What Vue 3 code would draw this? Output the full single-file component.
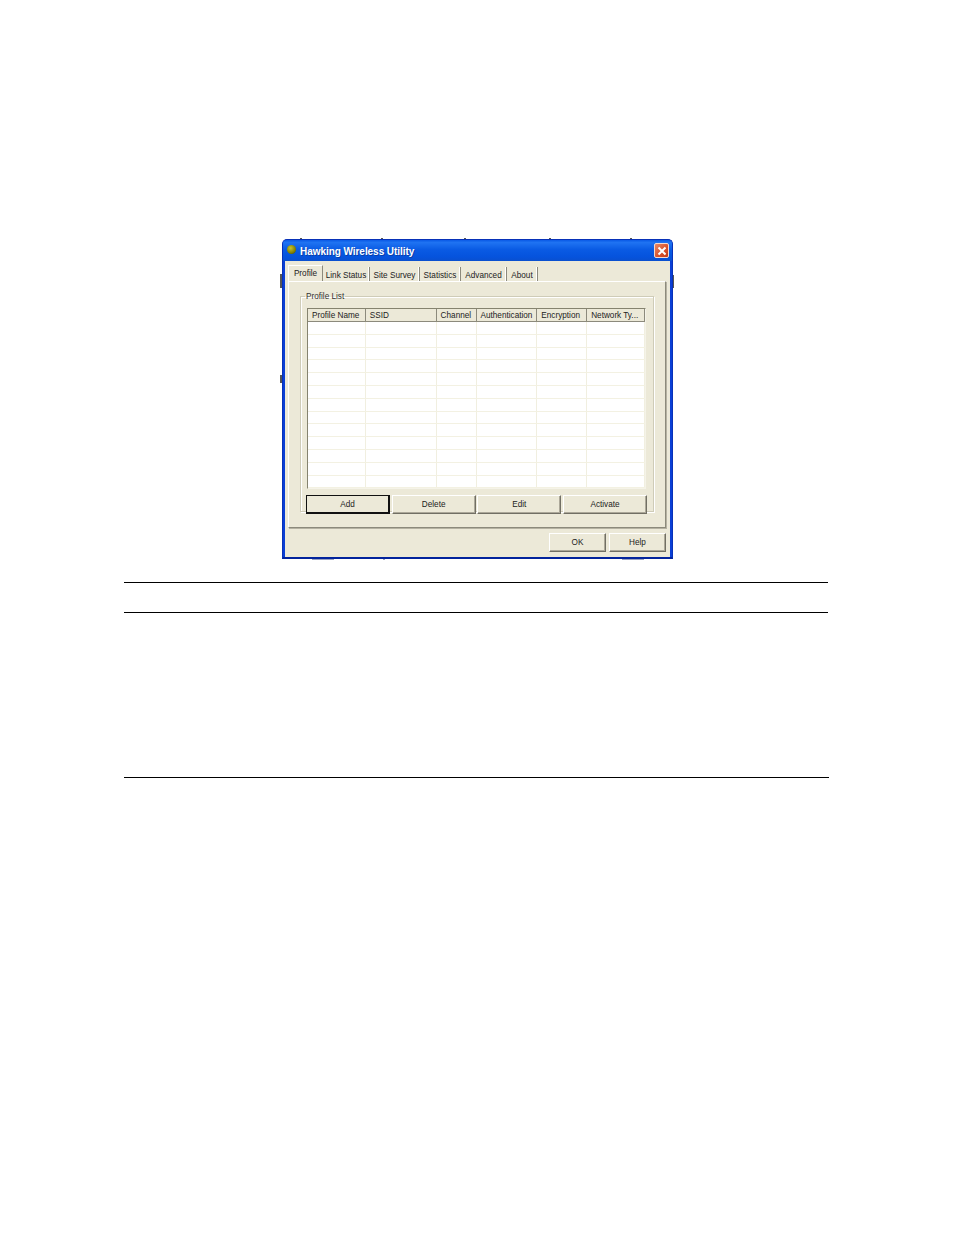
<script setup>
const tabs = [
  { label: 'Link Status', w: 47 },
  { label: 'Site Survey', w: 50 },
  { label: 'Statistics', w: 41 },
  { label: 'Advanced', w: 46 },
  { label: 'About', w: 31 }
]
const cols = [
  { label: 'Profile Name', w: 58 },
  { label: 'SSID', w: 71 },
  { label: 'Channel', w: 40 },
  { label: 'Authentication', w: 61 },
  { label: 'Encryption', w: 50 },
  { label: 'Network Ty...', w: 58 }
]
const rows = 13
const actions = ['Add', 'Delete', 'Edit', 'Activate']
const handles = [
  { x: 300, y: 238, w: 2, h: 1 }, { x: 381, y: 238, w: 2, h: 1 }, { x: 464, y: 238, w: 2, h: 1 },
  { x: 549, y: 238, w: 2, h: 1 }, { x: 630, y: 238, w: 2, h: 1 }, { x: 280, y: 274, w: 2, h: 14 },
  { x: 673, y: 275, w: 1, h: 13 }, { x: 280, y: 375, w: 2, h: 8 }, { x: 312, y: 559, w: 22, h: 1, faint: true },
  { x: 383, y: 559, w: 2, h: 1, faint: true }, { x: 622, y: 559, w: 22, h: 1, faint: true }
]
</script>

<template>
  <main class="page">
    <i
      v-for="(h, i) in handles"
      :key="i"
      class="handle"
      :class="{ faint: h.faint }"
      :style="{ left: h.x + 'px', top: h.y + 'px', width: h.w + 'px', height: h.h + 'px' }"
    ></i>

    <section class="window">
      <header class="titlebar">
        <span class="app-icon"></span>
        <span class="title">Hawking Wireless Utility</span>
        <span class="close">
          <svg width="12" height="12" viewBox="0 0 12 12">
            <path d="M2.5 2.5 9.5 9.5M9.5 2.5 2.5 9.5" stroke="#fff" stroke-width="2" fill="none" />
          </svg>
        </span>
      </header>

      <div class="client">
        <nav class="tabs">
          <span class="tab active">Profile</span>
          <span v-for="t in tabs" :key="t.label" class="tab" :style="{ width: t.w + 'px' }">{{ t.label }}</span>
        </nav>

        <div class="panel">
          <fieldset class="group">
            <legend>Profile List</legend>
            <div class="list">
              <div class="list-head">
                <span v-for="c in cols" :key="c.label" class="head-cell" :style="{ width: c.w + 'px' }">{{ c.label }}</span>
              </div>
              <div class="list-body">
                <div v-for="r in rows" :key="r" class="row">
                  <span v-for="c in cols" :key="c.label" class="cell" :style="{ width: c.w + 'px' }"></span>
                </div>
              </div>
            </div>
            <div class="actions">
              <button v-for="(a, i) in actions" :key="a" class="btn" :class="{ primary: i === 0 }">{{ a }}</button>
            </div>
          </fieldset>
        </div>

        <footer class="footer">
          <button class="btn small">OK</button>
          <button class="btn small">Help</button>
        </footer>
      </div>
    </section>

    <div class="rules">
      <hr class="rule first" />
      <hr class="rule second" />
      <hr class="rule third" />
    </div>
  </main>
</template>

<style scoped>
.page {
  position: relative;
  width: 954px;
  height: 1235px;
  background: #fff;
  padding-top: 239px;
  box-sizing: border-box;
  overflow: hidden;
  font-family: "Liberation Sans", Arial, sans-serif;
}
.handle {
  position: absolute;
  background: #555;
}
.handle.faint {
  background: #9aa3c4;
}
.window {
  margin-left: 282px;
  width: 391px;
  height: 320px;
  box-sizing: border-box;
  display: flex;
  flex-direction: column;
  background: #0a3fd6;
  border-radius: 5px 5px 0 0;
  border: 1px solid #0831b8;
  border-bottom: 2px solid #02239c;
}
.titlebar {
  height: 21px;
  flex: none;
  display: flex;
  align-items: center;
  padding: 0 3px;
  border-radius: 4px 4px 0 0;
  background: linear-gradient(#0a5ae6 0%, #1f73f2 12%, #0a5be4 45%, #0553dd 80%, #0a50cf 100%);
}
.app-icon {
  width: 9px;
  height: 9px;
  margin: -2px 4px 0 1px;
  border-radius: 50%;
  background: radial-gradient(circle at 40% 35%, #c9c42c, #7c7a00 65%, #2e2e00);
}
.title {
  flex: 1;
  padding-top: 2px;
  color: #fff;
  font-size: 10px;
  font-weight: 700;
  letter-spacing: -0.05px;
  text-shadow: 1px 1px 0 #0a3fa8;
}
.close {
  width: 15px;
  height: 15px;
  box-sizing: border-box;
  display: flex;
  align-items: center;
  justify-content: center;
  border: 1px solid #f3d9cf;
  border-radius: 2px;
  background: linear-gradient(135deg, #e88a68, #d8502a 60%, #c23a18);
}
.client {
  flex: 1;
  min-height: 0;
  margin: 0 2px;
  background: #ece9d8;
  display: flex;
  flex-direction: column;
  padding: 5px 4px 0 3px;
  color: #222;
}
.tabs {
  display: flex;
  height: 15px;
  font-size: 8.2px;
  line-height: 18px;
  align-items: flex-start;
  position: relative;
  z-index: 1;
}
.tab {
  height: 14px;
  margin-top: 1px;
  box-sizing: border-box;
  text-align: center;
  border-right: 1px solid #8c8a7c;
  white-space: nowrap;
  box-shadow: inset -1px 0 0 #fff;
}
.tab.active {
  width: 35px;
  height: 16px;
  margin-top: -1px;
  background: #ece9d8;
  border: 1px solid #fff;
  border-right: 1px solid #8c8a7c;
  border-bottom: none;
  box-shadow: none;
  line-height: 16px;
  font-size: 8.2px;
}
.panel {
  height: 247px;
  flex: none;
  box-sizing: border-box;
  border: 1px solid #fff;
  border-right-color: #8c8a7c;
  border-bottom-color: #8c8a7c;
  box-shadow: 1px 1px 0 #b5b2a2;
  padding: 8px 11px 0 11px;
}
.group {
  margin: 0;
  height: 222px;
  padding: 8px 6px 0 6px;
  box-sizing: border-box;
  border: 1px solid #cfccb8;
  box-shadow: inset 1px 1px 0 #fff, 1px 1px 0 #fff;
  min-width: 0;
}
legend {
  font-size: 8.2px;
  line-height: 10px;
  height: 10px;
  padding: 2px 1px 0;
  box-sizing: content-box;
  margin-left: -2px;
  color: #333;
}
.list {
  width: 339px;
  height: 181px;
  margin-top: -2px;
  box-sizing: border-box;
  border: 1px solid #85836f;
  border-right-color: #f5f3e8;
  border-bottom-color: #f5f3e8;
  background: #fff;
  overflow: hidden;
}
.list-head {
  display: flex;
  height: 13px;
  background: #ece9d8;
  border-bottom: 1px solid #8c8a7c;
  box-sizing: border-box;
}
.head-cell {
  box-sizing: border-box;
  padding-left: 4px;
  font-size: 8.2px;
  line-height: 13px;
  white-space: nowrap;
  overflow: hidden;
  border-right: 1px solid #8c8a7c;
}
.row {
  display: flex;
  height: 12.8px;
  box-sizing: border-box;
  border-bottom: 1px solid #f3f1e2;
}
.cell {
  box-sizing: border-box;
  border-right: 1px solid #f1efe0;
}
.actions {
  display: flex;
  gap: 1.7px;
  margin-top: 6px;
  margin-left: -1px;
}
.btn {
  width: 84px;
  height: 19px;
  padding: 0;
  background: #ece9d8;
  color: #222;
  font-family: inherit;
  font-size: 8.2px;
  border: 1px solid #fff;
  border-right-color: #716f64;
  border-bottom-color: #716f64;
  box-shadow: inset -1px -1px 0 #aca899;
}
.btn.primary {
  border: 1px solid #111;
  border-right-width: 2px;
  border-bottom-width: 2px;
  box-shadow: none;
}
.footer {
  display: flex;
  justify-content: flex-end;
  gap: 3px;
  margin-top: 5px;
}
.btn.small {
  width: 57px;
}
.rules {
  position: relative;
  margin-top: 23px;
}
.rule {
  margin: 0 0 0 124px;
  width: 704px;
  height: 1px;
  border: none;
  background: #000;
}
.second {
  margin-top: 29px;
}
.third {
  margin-top: 164px;
  width: 705px;
}
</style>
<style>
html, body { margin: 0; background: #fff; }
</style>
